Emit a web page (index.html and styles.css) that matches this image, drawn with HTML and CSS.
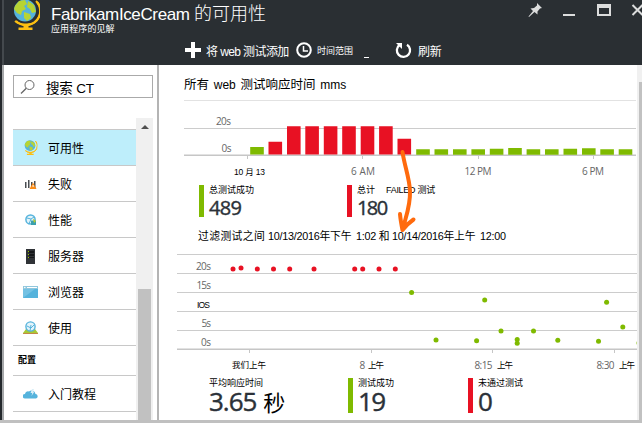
FILE: index.html
```html
<!DOCTYPE html>
<html lang="zh-CN">
<head>
<meta charset="utf-8">
<title>FabrikamIceCream 的可用性</title>
<link rel="stylesheet" href="styles.css">
</head>
<body>
<svg width="0" height="0" class="defs">
  <symbol id="globe" viewBox="0 0 28 33">
    <path d="M24 2A13 13 0 0 1 4 22" fill="none" stroke="#fcbf12" stroke-width="2"/>
    <path d="M11.500 25h5v3.500h4V31H6.500v-2.500h5z" fill="#fcbf12"/>
    <circle cx="13" cy="11.500" r="11" fill="#55b3dc"/>
    <path d="M3 7l4-5 6-1 2 4-3 2 2 3-4 2-1 4-4-2-3-4zM16 2l6 4 2 7-4 1-2-4-3-2zM12 13l6 2 1 4-4 3-3-3z" fill="#b7d433"/>
    <path d="M25 3A13.500 13.500 0 0 1 15 25.500Q8 26 3 22" fill="none" stroke="#fcbf12" stroke-width="2"/>
  </symbol>
</svg>
<div class="window">
  <header class="header">
    <div class="title-row">
      <svg class="logo" width="28" height="33"><use href="#globe"/></svg>
      <div class="titles">
        <h1>FabrikamIceCream <span>的可用性</span></h1>
        <p>应用程序的见解</p>
      </div>
      <svg class="controls" width="118" height="20" viewBox="0 0 118 20">
        <path d="M13 3l5 5-2 .5-2.500 3v3l-3-2.500L5 17l-.5-.5L9 11 6.500 8.500l3.500-.5 3-2.500z" fill="#dcdddd"/>
        <path d="M39 14h12v2H39z" fill="#dcdddd"/>
        <path d="M73 4h14v12H73zM75 8v6h10V8z" fill="#dcdddd" fill-rule="evenodd"/>
        <path d="M108.500 5l10 10m0-10l-10 10" stroke="#dcdddd" stroke-width="2"/>
      </svg>
    </div>
    <div class="toolbar">
      <svg width="16" height="16" viewBox="0 0 16 16"><path d="M6 0h4v6h6v4h-6v6H6v-6H0V6h6z" fill="#fff"/></svg>
      <span class="add">将 <b>web</b> 测试添加</span>
      <svg width="16" height="16" viewBox="0 0 16 16"><circle cx="8" cy="8" r="6.800" fill="none" stroke="#fff" stroke-width="2"/><path d="M7.500 4v5H12" fill="none" stroke="#fff" stroke-width="1.500"/></svg>
      <span class="range">时间范围</span>
      <i class="dash"></i>
      <svg width="17" height="17" viewBox="0 0 17 17"><path d="M12 2.700A6.600 6.600 0 1 1 4.500 3" fill="none" stroke="#fff" stroke-width="2.300"/><path d="M1 1h6v6z" fill="#fff"/></svg>
      <span class="refresh">刷新</span>
    </div>
  </header>
  <div class="body">
    <aside class="sidebar">
      <div class="search">
        <svg width="16" height="16" viewBox="0 0 16 16"><circle cx="9.500" cy="6" r="4.500" fill="none" stroke="#666"/><path d="M6.300 9.200L1 14.500" stroke="#666" stroke-width="1.300"/></svg>
        <span>搜索 CT</span>
      </div>
      <div class="menu">
        <nav>
          <a class="item active"><svg width="15" height="16" viewBox="0 0 28 33"><use href="#globe"/></svg><span>可用性</span></a>
          <a class="item"><svg width="15" height="16" viewBox="0 0 15 16"><path d="M2 6h1.500v6H2zM5 4h1.500v8H5zM8 6h1.500v6H8zM11 5h1.500v7H11z" fill="#4a4e52"/><path d="M10 6.500l3.500 6.500h-7z" fill="#fa8b16"/><path d="M9.600 9h1v2h-1z" fill="#fff"/></svg><span>失败</span></a>
          <a class="item"><svg width="15" height="16" viewBox="0 0 15 16"><circle cx="7.500" cy="7.500" r="4.600" fill="#e3f4fb" stroke="#55b3dc" stroke-width="1.500"/><path d="M4 6l4 1 3-2M6 12l2-5" stroke="#55b3dc" fill="none"/><path d="M8 8.500h5V13H8z" fill="#3ba0ae"/><path d="M10 6.500l3 2.500-2 2z" fill="#b7c933"/></svg><span>性能</span></a>
          <a class="item"><svg width="15" height="16" viewBox="0 0 15 16"><path d="M3 1h9v15H3z" fill="#303337"/><path d="M6 3h5v2H6zM6 6h5v2H6zM6 9h5v1H6z" fill="#151719"/><path d="M5 3h1v1H5zM5 6h1v1H5zM5 9h1v1H5z" fill="#9cc400"/></svg><span>服务器</span></a>
          <a class="item"><svg width="15" height="16" viewBox="0 0 15 16"><path d="M0 2h15v12H0z" fill="#55b3dc"/><path d="M0 2h15v3H0z" fill="#91c7dd"/><path d="M4 3h10v1H4z" fill="#fff"/><circle cx="1.800" cy="3.500" r=".8" fill="#fff"/><path d="M0 14V5h12z" fill="#73c1e3"/></svg><span>浏览器</span></a>
          <a class="item"><svg width="15" height="16" viewBox="0 0 15 16"><path d="M0 13l3-4h9l3 4z" fill="#a7c936"/><path d="M0 13h15v1H0z" fill="#c48a45"/><circle cx="7.500" cy="6.500" r="4.600" fill="#e3f4fb" stroke="#55b3dc" stroke-width="1.400"/><path d="M4 6l4 2 3-3M7 11l1-6" stroke="#55b3dc" fill="none"/></svg><span>使用</span></a>
          <div class="group">配置</div>
          <a class="item"><svg width="15" height="16" viewBox="0 0 15 16"><path d="M2 12.500a2.300 2.300 0 0 1 0-4.600 3 3 0 0 1 4-2.400 4 4 0 0 1 6.500 2.500 2.300 2.300 0 0 1 .5 4.500z" fill="#55b3dc"/><path d="M9 3L7.500 7h1.700l-.7 3 3-4.500H10L11 3z" fill="#d9eef7"/></svg><span>入门教程</span></a>
        </nav>
        <div class="scroll"><i class="up"></i><i class="thumb"></i></div>
      </div>
    </aside>
    <main class="main">
      <h2>所有 <b>web</b> 测试响应时间 <b>mms</b></h2>
      <svg class="chart" width="478" height="79" viewBox="159 101 478 79">
        <path d="M184 128.500h452" stroke="#ccc"/>
        <path d="M184 154.500h452" stroke="#e2e2e2"/>
        <path d="M184 155.500h452M247.500 156v3M362.500 156v3M478.500 156v3M593.500 156v3" stroke="#c6c6c6"/>
        <g fill="#7fba00">
          <path d="M250.200 147h13.600v7.500h-13.600zM416.200 149.200h13.600v5.500h-13.600zM434.500 149.200h13.600v5.500h-13.600zM453 149.200h13.600v5.500H453zM471.400 149.200H485v5.500h-13.600zM489.800 148.700h13.600v6h-13.600zM508.200 148h13.600v6.700h-13.600zM526.600 149.200h13.600v5.500h-13.600zM545 149.200h13.600v5.500H545zM563.500 148.800h13.600v5.900h-13.600zM582 148.200h13.600v6.500H582zM600.300 149.200h13.600v5.500h-13.600zM618.700 149.200h13.600v5.500h-13.600z"/>
        </g>
        <g fill="#e81123">
          <path d="M268.500 141.700h13.600v12.800h-13.600zM287 126.300h13.600v28.200H287zM305.300 126.300h13.600v28.200h-13.600zM323.800 126.300h13.600v28.200h-13.600zM342.200 126.300h13.600v28.200h-13.600zM360.700 126.300h13.600v28.200h-13.600zM379.100 126.300h13.600v28.200h-13.600zM397.500 138.700h13.600v15.800h-13.600z"/>
        </g>
        <g class="axis">
          <text x="216" y="125" textLength="15">20s</text>
          <text x="221.500" y="152" textLength="10">0s</text>
          <text x="234" y="175" textLength="31" class="dark">10 月 13</text>
          <text x="351" y="175" textLength="24">6 AM</text>
          <text x="464.500" y="175" textLength="27">12 PM</text>
          <text x="582" y="175" textLength="22">6 PM</text>
        </g>
      </svg>
      <section class="stats totals">
        <div class="stat green"><span>总测试成功</span><strong>489</strong></div>
        <div class="stat red"><span>总计<em>FAILED 测试</em></span><strong class="tight">180</strong></div>
      </section>
      <p class="filter"><span class="f1">过滤测试之间</span><span class="f2">10/13/2016年下午</span><span class="f3">1:02 和</span><span class="f4">10/14/2016年上午</span><span>12:00</span></p>
      <svg class="chart" width="478" height="120" viewBox="159 253 478 120">
        <path d="M177 254.500h460M177 273.500h460M177 292.500h460M177 311.500h460M177 330.500h460" stroke="#ccc"/>
        <path d="M177 348.500h460" stroke="#e2e2e2"/>
        <path d="M177 349.500h460M249.500 350v3M371.500 350v3M492.500 350v3M614.500 350v3" stroke="#c6c6c6"/>
        <g fill="#e81123">
          <circle cx="233" cy="269" r="2.500"/><circle cx="241" cy="268" r="2.500"/><circle cx="257.300" cy="269" r="2.500"/><circle cx="273.500" cy="269" r="2.500"/><circle cx="289.700" cy="269" r="2.500"/><circle cx="314" cy="269" r="2.500"/><circle cx="354.700" cy="269" r="2.500"/><circle cx="362.700" cy="269" r="2.500"/><circle cx="379" cy="269" r="2.500"/><circle cx="395.300" cy="269" r="2.500"/>
        </g>
        <g fill="#7fba00">
          <circle cx="411.600" cy="292.500" r="2.500"/><circle cx="484.700" cy="300" r="2.500"/><circle cx="606.600" cy="302.300" r="2.500"/><circle cx="436" cy="340" r="2.500"/><circle cx="476.600" cy="340.700" r="2.500"/><circle cx="501" cy="331" r="2.500"/><circle cx="517.200" cy="339.500" r="2.500"/><circle cx="517.200" cy="343.300" r="2.500"/><circle cx="533.500" cy="331" r="2.500"/><circle cx="557.800" cy="340.300" r="2.500"/><circle cx="598.500" cy="341.300" r="2.500"/><circle cx="622.800" cy="327" r="2.500"/><circle cx="639" cy="343" r="2.500"/>
        </g>
        <g class="axis">
          <text x="196" y="270" textLength="15">20s</text>
          <text x="196.500" y="289" textLength="14.500">15s</text>
          <text x="197" y="308" textLength="13" class="dark">IOS</text>
          <text x="201.500" y="327" textLength="9.500">5s</text>
          <text x="201" y="346" textLength="10">0s</text>
          <text x="232" y="368" textLength="34" class="dark">我们上午</text>
          <text x="359.500" y="369">8</text><text x="368" y="368" textLength="16" class="dark">上午</text>
          <text x="474.500" y="369" textLength="18">8:15</text><text x="497" y="368" textLength="16" class="dark">上午</text>
          <text x="596.500" y="369" textLength="18">8:30</text><text x="619" y="368" textLength="16" class="dark">上午</text>
        </g>
      </svg>
      <section class="stats results">
        <div class="stat plain"><span>平均响应时间</span><strong>3.65 <b>秒</b></strong></div>
        <div class="stat green"><span>测试成功</span><strong class="tight">19</strong></div>
        <div class="stat red"><span>未通过测试</span><strong>0</strong></div>
      </section>
    </main>
    <div class="page-scroll"><i></i></div>
  </div>
  <svg class="arrow" width="50" height="90" viewBox="380 145 50 90"><path d="M402.500 152c2 14 7 26 7.500 39 .5 15-4 25-7 37M400 214c.5 6 1.500 11 2.500 16 3-4 6-7 11-10.500" fill="none" stroke="#ff6a0d" stroke-width="4" stroke-linecap="round" stroke-linejoin="round"/></svg>
</div>
</body>
</html>
```
FILE: styles.css
```css
* { box-sizing: border-box; }
body { margin: 0; font-family: "Liberation Sans", "Noto Sans CJK SC", sans-serif; color: #000; background: #fff; }
.defs { display: block; position: absolute; }
svg { display: block; flex: none; }
h1, h2, p { margin: 0; font-weight: 400; }
.window { position: relative; width: 642px; height: 423px; overflow: hidden; display: flex; flex-direction: column; border-bottom: 3px solid #c0c0c0; }
.header { height: 65px; flex: none; background: #2a2f33; color: #fff; border-left: 2px solid #24282c; box-shadow: inset 2px 0 #44494d; }
.title-row { display: flex; height: 37px; padding-left: 10px; }
.logo { margin-top: -1px; }
.titles { width: 484px; flex: none; padding-left: 11px; white-space: nowrap; }
h1 { font-size: 17px; line-height: 22px; margin-top: 3px; letter-spacing: -0.37px; }
h1 span { font-size: 18px; font-weight: 300; letter-spacing: 0; }
.titles p { font-size: 9px; line-height: 10px; margin-top: -2px; letter-spacing: 0.1px; }
.toolbar { display: flex; align-items: center; height: 26px; padding-left: 183px; font-size: 12px; white-space: nowrap; }
.toolbar b { font-weight: 400; }
.add { width: 84px; margin-left: 5px; margin-right: 6px; letter-spacing: -0.6px; }
.range { width: 36px; font-size: 9px; margin-left: 5px; }
.dash { width: 5px; height: 1px; background: #fff; margin: 14px 26px 0 11px; }
.refresh { margin-left: 6px; letter-spacing: -0.3px; }
.body { display: flex; height: 355px; flex: none; }
.sidebar { width: 159px; flex: none; border-left: 2px solid #24282c; border-right: 2px solid #b4b4b4; box-shadow: inset 2px 0 #a5a7a9; padding: 10px 4px 0 11px; }
.search { display: flex; align-items: center; height: 23px; border: 1px solid #aaa; padding-left: 6px; font-size: 13.500px; }
.search span { margin-left: 10px; letter-spacing: -0.2px; }
.menu { display: flex; height: 302px; margin-top: 20px; overflow: hidden; }
nav { width: 123px; padding-top: 11px; }
.item { display: flex; align-items: center; height: 36px; border-top: 1px solid #c8c8c8; padding-left: 10px; font-size: 12px; }
.item span { margin-left: 10px; }
.active { background: #beeefb; }
.group { height: 30px; border-top: 1px solid #c8c8c8; padding-left: 5px; font-size: 9px; line-height: 28px; font-weight: 700; }
nav .item:last-child { height: 37px; border-bottom: 1px solid #c8c8c8; }
.scroll { width: 17px; background: #f0f0f0; display: flex; flex-direction: column; align-items: center; }
.up { margin-top: 7px; border: 4px solid transparent; border-top: 0; border-bottom: 4px solid #505050; }
.thumb { width: 13px; margin-top: 160px; flex: 1; background: #c1c1c1; }
.main { width: 478px; flex: none; }
h2 { height: 36px; margin: 0 1px 0 25px; border-bottom: 1px solid #e2e2e2; font-size: 12.500px; line-height: 40px; white-space: nowrap; }
h2 b { font-weight: 400; font-size: 12px; margin: 0 1.300px; }
.axis { font: 10px "Open Sans", "Noto Sans CJK SC", sans-serif; fill: #666; }
.axis .dark { font-size: 8.500px; fill: #000; font-family: "Liberation Sans", "Noto Sans CJK SC", sans-serif; }
.stats { display: flex; }
.stat { width: 119px; border-left: 5px solid; padding-left: 5px; color: #2b3138; white-space: nowrap; }
.stat span { display: block; font-size: 9px; line-height: 11px; color: #000; }
.stat em { font-style: normal; margin-left: 11px; letter-spacing: -0.3px; }
.stat strong { display: block; font: 20px/24px "Open Sans", "Noto Sans CJK SC", sans-serif; letter-spacing: -0.7px; -webkit-text-stroke: 0.4px; }
.stat .tight { letter-spacing: -1.600px; }
.green { border-color: #7fba00; }
.red { border-color: #e81123; }
.plain { border-color: transparent; }
.totals { height: 37px; padding: 5px 0 0 40px; }
.totals .stat { height: 32px; width: 148px; }
.filter { display: flex; height: 36px; padding: 0 0 0 39px; font-size: 10.800px; line-height: 38px; white-space: nowrap; letter-spacing: -0.25px; }
.f1 { width: 70px; letter-spacing: 0.4px; }
.f2 { width: 88px; }
.f3 { width: 36px; }
.f4 { width: 88px; }
.results { padding: 5px 0 0 40px; }
.results .stat { height: 35px; width: 120px; }
.results .plain { width: 149px; }
.results strong { font-size: 26px; letter-spacing: -1px; }
.results b { font-weight: 400; font-size: 22px; color: #000; margin-left: 1px; -webkit-text-stroke: 0; }
.page-scroll { width: 5px; flex: none; background: #f0f0f0; padding: 17px 0 0 2px; }
.page-scroll i { display: block; height: 338px; background: #c1c1c1; }
.arrow { position: absolute; left: 380px; top: 145px; }
```
